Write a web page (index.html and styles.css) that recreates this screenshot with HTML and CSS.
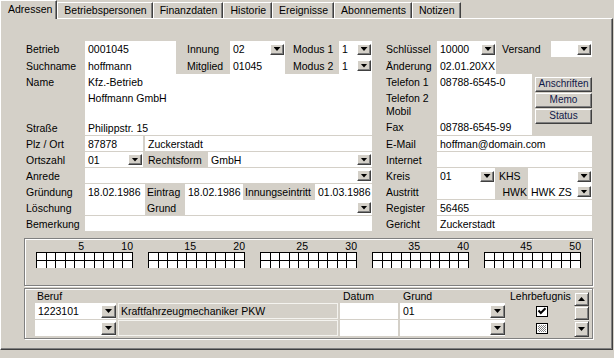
FILE: index.html
```html
<!DOCTYPE html>
<html>
<head>
    <meta charset="UTF-8">
    <title>Adressen</title>
    <link rel="stylesheet" href="styles.css">
</head>
<body>
<div class="window">
    <div class="tabs">
        <div class="tab active">Adressen</div>
        <div class="tab">Betriebspersonen</div>
        <div class="tab">Finanzdaten</div>
        <div class="tab">Historie</div>
        <div class="tab">Ereignisse</div>
        <div class="tab">Abonnements</div>
        <div class="tab">Notizen</div>
    </div>

    <div class="panel">
        <div class="form">
            <!-- left block: company data -->
            <div class="col-left">
                <div class="row tight">
                    <div class="lbl">Betrieb</div>
                    <div class="fld f-betrieb">0001045</div>
                    <div class="lbl l-innung">Innung</div>
                    <div class="fld combo f-innung">02<span class="drop"></span></div>
                    <div class="lbl l-modus">Modus 1</div>
                    <div class="fld combo f-modus">1<span class="drop"></span></div>
                </div>
                <div class="row tight tall">
                    <div class="lbl">Suchname</div>
                    <div class="fld f-betrieb">hoffmann</div>
                    <div class="lbl l-innung">Mitglied</div>
                    <div class="fld f-innung">01045</div>
                    <div class="lbl l-modus">Modus 2</div>
                    <div class="fld combo f-modus">1<span class="drop"></span></div>
                </div>
                <div class="row tight name-row">
                    <div class="lbl lbl-top">Name</div>
                    <div class="fld multi f-wide">Kfz.-Betrieb<br>Hoffmann GmbH</div>
                </div>
                <div class="row">
                    <div class="lbl">Straße</div>
                    <div class="fld f-wide">Philippstr. 15</div>
                </div>
                <div class="row">
                    <div class="lbl">Plz / Ort</div>
                    <div class="fld f-short">87878</div>
                    <div class="fld f-ort">Zuckerstadt</div>
                </div>
                <div class="row">
                    <div class="lbl">Ortszahl</div>
                    <div class="fld combo f-short">01<span class="drop"></span></div>
                    <div class="lbl l-rechtsform">Rechtsform</div>
                    <div class="fld combo f-rechtsform">GmbH<span class="drop"></span></div>
                </div>
                <div class="row">
                    <div class="lbl">Anrede</div>
                    <div class="fld combo f-wide"><span class="drop"></span></div>
                </div>
                <div class="row tight">
                    <div class="lbl">Gründung</div>
                    <div class="fld f-date">18.02.1986</div>
                    <div class="lbl l-eintrag">Eintrag</div>
                    <div class="fld f-eintrag">18.02.1986</div>
                    <div class="lbl l-innungseintritt">Innungseintritt</div>
                    <div class="fld f-ie">01.03.1986</div>
                </div>
                <div class="row">
                    <div class="lbl">Löschung</div>
                    <div class="fld f-date"></div>
                    <div class="lbl l-eintrag">Grund</div>
                    <div class="fld combo f-grund"><span class="drop"></span></div>
                </div>
                <div class="row">
                    <div class="lbl">Bemerkung</div>
                    <div class="fld f-wide"></div>
                </div>
            </div>

            <!-- right block: contact data -->
            <div class="col-right">
                <div class="row tight">
                    <div class="lbl rlbl">Schlüssel</div>
                    <div class="fld combo f-key">10000<span class="drop"></span></div>
                    <div class="lbl l-versand">Versand</div>
                    <div class="fld combo f-versand"><span class="drop"></span></div>
                </div>
                <div class="row tight tall">
                    <div class="lbl rlbl">Änderung</div>
                    <div class="fld f-key">02.01.20XX</div>
                </div>
                <div class="tel-block">
                    <div class="tel-labels">
                        <div>Telefon 1</div>
                        <div>Telefon 2</div>
                        <div class="mobil">Mobil</div>
                        <div class="fax">Fax</div>
                    </div>
                    <div class="fld tel-values">
                        <div>08788-6545-0</div>
                        <div>08788-6545-99</div>
                    </div>
                    <div class="side-buttons">
                        <div class="btn">Anschriften</div>
                        <div class="btn">Memo</div>
                        <div class="btn">Status</div>
                    </div>
                </div>
                <div class="row">
                    <div class="lbl rlbl">E-Mail</div>
                    <div class="fld f-rwide">hoffman@domain.com</div>
                </div>
                <div class="row">
                    <div class="lbl rlbl">Internet</div>
                    <div class="fld f-rwide"></div>
                </div>
                <div class="row tight">
                    <div class="lbl rlbl">Kreis</div>
                    <div class="fld combo f-kreis">01<span class="drop"></span></div>
                    <div class="lbl l-khs">KHS</div>
                    <div class="fld combo f-khs"><span class="drop"></span></div>
                </div>
                <div class="row">
                    <div class="lbl rlbl">Austritt</div>
                    <div class="fld f-kreis"></div>
                    <div class="lbl l-khs l-hwk">HWK</div>
                    <div class="fld combo f-khs">HWK ZS<span class="drop"></span></div>
                </div>
                <div class="row">
                    <div class="lbl rlbl">Register</div>
                    <div class="fld f-rwide">56465</div>
                </div>
                <div class="row">
                    <div class="lbl rlbl">Gericht</div>
                    <div class="fld f-rwide">Zuckerstadt</div>
                </div>
            </div>
        </div>

        <div class="group ruler-group">
            <div class="ruler" id="ruler"></div>
        </div>

        <div class="group beruf-group">
            <div class="beruf-table">
                <div class="th">Beruf</div>
                <div class="th"></div>
                <div class="th">Datum</div>
                <div class="th">Grund</div>
                <div class="th">Lehrbefugnis</div>

                <div class="fld combo cell">1223101<span class="drop big"></span></div>
                <div class="desc">Kraftfahrzeugmechaniker PKW</div>
                <div class="fld cell"></div>
                <div class="fld combo cell">01<span class="drop big"></span></div>
                <div class="check-cell"><span class="check on"></span></div>

                <div class="fld combo cell"><span class="drop big"></span></div>
                <div class="desc"></div>
                <div class="fld cell"></div>
                <div class="fld combo cell"><span class="drop big"></span></div>
                <div class="check-cell"><span class="check mixed"></span></div>
            </div>
            <div class="scrollbar">
                <div class="sb-btn up"></div>
                <div class="sb-thumb"></div>
                <div class="sb-track"></div>
                <div class="sb-btn down"></div>
            </div>
        </div>
    </div>
</div>

<script>
    // 5 blocks of 10 positions, numbered every 5
    const ruler = document.getElementById('ruler');
    for (let b = 0; b < 5; b++) {
        const block = document.createElement('div');
        block.className = 'block';
        const nums = document.createElement('div');
        nums.className = 'nums';
        nums.innerHTML = '<span>' + (b * 10 + 5) + '</span><span>' + (b * 10 + 10) + '</span>';
        const cells = document.createElement('div');
        cells.className = 'cells';
        for (let i = 0; i < 20; i++) {
            cells.appendChild(document.createElement('i'));
        }
        block.appendChild(nums);
        block.appendChild(cells);
        ruler.appendChild(block);
    }
</script>
</body>
</html>
```

FILE: styles.css
```css
body {
    margin: 0;
    background: #d4d0c8;
    font-family: "Liberation Sans", Arial, sans-serif;
    font-size: 10.5px;
    color: #000;
    overflow: hidden;
}
.window {
    width: 614px;
    height: 358px;
}

/* tabs */
.tabs {
    display: flex;
    align-items: flex-end;
    height: 18px;
    position: relative;
    z-index: 1;
}
.tab {
    box-sizing: border-box;
    height: 16px;
    line-height: 15px;
    padding: 0 5px 0 6px;
    border-top: 1px solid #fff;
    border-left: 1px solid #fff;
    border-right: 1px solid #404040;
    box-shadow: inset -1px 0 #808080;
    white-space: nowrap;
}
.tab.active {
    height: 19px;
    line-height: 16px;
    margin-bottom: -1px;
    padding: 0 4px 0 7px;
    background: #d4d0c8;
}

/* panel */
.panel {
    box-sizing: border-box;
    width: 613px;
    height: 332px;
    border-top: 1px solid #fff;
    border-left: 1px solid #fff;
    border-right: 1px solid #404040;
    border-bottom: 1px solid #404040;
    box-shadow: inset -1px -1px #808080;
    padding-top: 22px;
}
.form {
    display: flex;
    margin-left: 25px;
}
.col-left {
    width: 346px;
}
.col-right {
    width: 220px;
}
.row {
    display: flex;
    height: 16px;
    box-sizing: border-box;
    padding-bottom: 1px;
}
.row.tight {
    padding-bottom: 0;
}
.row.tall {
    height: 17px;
}
.row.name-row {
    height: 46px;
}

.lbl {
    width: 59px;
    flex-shrink: 0;
    display: flex;
    align-items: center;
    white-space: nowrap;
}
.lbl-top {
    align-items: flex-start;
    line-height: 16px;
}
.rlbl {
    width: 51px;
    padding-left: 14px;
}
.fld {
    box-sizing: border-box;
    background: #fff;
    display: flex;
    align-items: center;
    padding-left: 3px;
    white-space: nowrap;
    overflow: hidden;
    flex-shrink: 0;
}
.fld.multi {
    display: block;
    line-height: 16px;
}

/* left widths */
.f-betrieb { width: 91px; }
.l-innung { width: 43px; padding-left: 11px; }
.f-innung { width: 55px; }
.l-modus { width: 46px; padding-left: 8px; }
.f-modus { width: 33px; }
.f-wide { width: 287px; }
.f-short { width: 58px; }
.f-ort { width: 227px; margin-left: 2px; }
.l-rechtsform { width: 60px; padding-left: 5px; }
.f-rechtsform { width: 164px; }
.f-date { width: 60px; }
.l-eintrag { width: 38px; padding-left: 2px; }
.f-eintrag { width: 58px; }
.l-innungseintritt { width: 70px; padding-left: 2px; }
.f-ie { width: 57px; }
.f-grund { width: 187px; }

/* right widths */
.f-key { width: 59px; }
.l-versand { width: 49px; padding-left: 6px; }
.f-versand { width: 41px; }
.f-rwide { width: 155px; }
.f-kreis { width: 58px; }
.l-khs { width: 29px; padding-left: 4px; }
.l-hwk { justify-content: flex-end; padding-left: 0; padding-right: 1px; width: 32px; }
.f-khs { width: 64px; }

.tel-block {
    display: flex;
    height: 62px;
}
.tel-labels {
    width: 51px;
    padding-left: 14px;
}
.tel-labels div {
    height: 16px;
    line-height: 16px;
}
.tel-labels .mobil {
    height: 12px;
    line-height: 10px;
}
.tel-labels .fax {
    height: 18px;
    line-height: 18px;
}
.tel-values {
    width: 95px;
    height: 61px;
    flex-direction: column;
    align-items: flex-start;
    justify-content: space-between;
    line-height: 16px;
}
.side-buttons {
    display: flex;
    flex-direction: column;
    gap: 1px;
    padding-top: 3px;
    margin-left: 3px;
}
.btn {
    box-sizing: border-box;
    width: 57px;
    height: 15px;
    background: #d4d0c8;
    border: 1px solid;
    border-color: #fff #404040 #404040 #fff;
    box-shadow: inset -1px -1px #808080;
    font-size: 10px;
    line-height: 12px;
    text-align: center;
    color: #101848;
}

/* combo drop button */
.drop {
    box-sizing: border-box;
    width: 14px;
    height: 11px;
    margin-left: auto;
    margin-right: 1px;
    background: #d4d0c8;
    border: 1px solid;
    border-color: #fff #404040 #404040 #fff;
    box-shadow: inset -1px -1px #808080;
    display: flex;
    align-items: center;
    justify-content: center;
    flex-shrink: 0;
}
.drop::after {
    content: "";
    width: 7px;
    height: 4px;
    background: #000;
    clip-path: polygon(0 0, 100% 0, 50% 100%);
}
.drop.big {
    width: 15px;
    height: 13px;
    margin-right: 0;
}

/* group boxes */
.group {
    box-sizing: border-box;
    width: 569px;
    margin-left: 23px;
    border: 1px solid #808080;
    box-shadow: inset 1px 1px #fff, 1px 1px #fff;
}
.ruler-group {
    height: 48px;
    margin-top: 6px;
    padding: 2px 0 0 11px;
}
.ruler {
    display: flex;
    gap: 15px;
}
.block {
    width: 97px;
}
.nums {
    display: flex;
    height: 11px;
    line-height: 11px;
}
.nums span {
    width: 50%;
    text-align: right;
}
.nums span:first-child {
    padding-right: 1px;
}
.cells {
    box-sizing: border-box;
    display: grid;
    grid-template-columns: repeat(10, 1fr);
    grid-template-rows: 7px 7px;
    gap: 1px;
    height: 16px;
    padding: 1px 1px 0 1px;
    background: #000;
}
.cells i {
    background: #fff;
}

.beruf-group {
    display: flex;
    height: 51px;
    margin-top: 2px;
    padding: 0 3px 0 10px;
}
.beruf-table {
    display: grid;
    grid-template-columns: 81px 220px 58px 105px 65px;
    grid-template-rows: 13px 16px 16px;
    column-gap: 2px;
    row-gap: 1px;
}
.th {
    padding-left: 3px;
    line-height: 14px;
    white-space: nowrap;
}
.th:first-child {
    padding-left: 2px;
}
.cell {
    height: 16px;
}
.desc {
    box-sizing: border-box;
    border: 1px solid #f4f3ef;
    padding-left: 2px;
    line-height: 14px;
    white-space: nowrap;
}
.check-cell {
    display: flex;
    align-items: center;
    padding-left: 29px;
}
.check {
    box-sizing: border-box;
    width: 12px;
    height: 11px;
    border: 1px solid #000;
    background: #fff;
}
.check.on {
    background: #fff url("data:image/svg+xml,%3Csvg xmlns='http://www.w3.org/2000/svg' width='10' height='9'%3E%3Cpath d='M1.5 3.5 L3.8 6 L8.5 1.2' stroke='%23000' stroke-width='2' fill='none'/%3E%3C/svg%3E") no-repeat;
}
.check.mixed {
    background: repeating-conic-gradient(#808080 0% 25%, #fff 0% 50%) 0 0 / 2px 2px;
    box-shadow: inset 0 0 0 1px #fff;
}

.scrollbar {
    display: flex;
    flex-direction: column;
    width: 15px;
    margin-top: 3px;
    margin-left: auto;
}
.sb-btn, .sb-thumb {
    box-sizing: border-box;
    background: #d4d0c8;
    border: 1px solid;
    border-color: #d4d0c8 #404040 #404040 #d4d0c8;
    box-shadow: inset 1px 1px #fff, inset -1px -1px #808080;
    display: flex;
    align-items: center;
    justify-content: center;
}
.sb-btn.up { height: 14px; }
.sb-thumb { height: 14px; }
.sb-track {
    height: 1px;
    background: #eeece8;
}
.sb-btn.down { height: 16px; }
.sb-btn::after {
    content: "";
    width: 7px;
    height: 4px;
    background: #000;
}
.sb-btn.up::after {
    clip-path: polygon(50% 0, 100% 100%, 0 100%);
}
.sb-btn.down::after {
    clip-path: polygon(0 0, 100% 0, 50% 100%);
}
```
